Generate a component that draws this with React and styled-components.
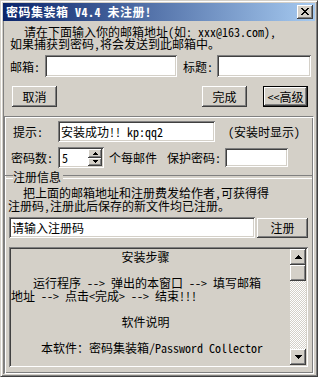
import React from 'react';
import styled, {createGlobalStyle, css} from 'styled-components';

const FONT = `"Noto Sans Mono CJK SC", "Noto Sans CJK SC", "DejaVu Sans", sans-serif`;

const GlobalStyle = createGlobalStyle`
  html, body {
    margin: 0;
    padding: 0;
    background: #d4d0c8;
  }
  * {
    box-sizing: border-box;
  }
`;

const raised = css`
  box-shadow: inset -1px -1px #404040, inset 1px 1px #fff, inset -2px -2px #808080, inset 2px 2px #d4d0c8;
`;

const sunken = css`
  box-shadow: inset 1px 1px #808080, inset -1px -1px #fff, inset 2px 2px #404040, inset -2px -2px #d4d0c8;
`;

const Window = styled.div`
  width: 318px;
  height: 377px;
  display: flex;
  flex-direction: column;
  background: #d4d0c8;
  border: 1px solid;
  border-color: #d4d0c8 #404040 #404040 #d4d0c8;
  box-shadow: inset 1px 1px #fff, inset -1px -1px #808080;
  padding: 2px;
  font-family: ${FONT};
  font-size: 12px;
  color: #000;
`;

const TitleBar = styled.div`
  height: 18px;
  flex: none;
  display: flex;
  align-items: center;
  justify-content: space-between;
  padding: 0 2px 0 3px;
  background: linear-gradient(to right, #0a246a, #a6caf0);
`;

const TitleText = styled.span`
  color: #fff;
  font-weight: bold;
  font-size: 12px;
  line-height: 14px;
  letter-spacing: 0.5px;
  white-space: pre;
`;

const CloseButton = styled.div`
  width: 16px;
  height: 14px;
  background: #d4d0c8;
  ${raised};
  display: flex;
  align-items: center;
  justify-content: center;
  padding: 0 1px 1px 0;
`;

const Client = styled.div`
  flex: 1;
  display: flex;
  flex-direction: column;
  border-left: 1px solid #808080;
`;

const Intro = styled.div`
  margin-top: 5px;
  padding-left: 6px;
  line-height: 12px;
  white-space: pre;
`;

const IndentLine = styled.div`
  padding-left: ${(p) => p.$indent || 0}px;
`;

const Row = styled.div`
  display: flex;
  align-items: center;
  height: ${(p) => p.$h || 22}px;
  margin-top: ${(p) => p.$mt || 0}px;
  padding-left: ${(p) => p.$pl || 0}px;
  padding-right: ${(p) => p.$pr || 0}px;
`;

const Label = styled.span`
  width: ${(p) => p.$w}px;
  flex: none;
  white-space: pre;
  margin-left: ${(p) => p.$ml || 0}px;
`;

const TextBox = styled.div`
  width: ${(p) => p.$w}px;
  height: ${(p) => p.$h || 22}px;
  flex: none;
  background: #fff;
  ${sunken};
  padding: 0 3px;
  display: flex;
  align-items: center;
  white-space: pre;
  margin-left: ${(p) => p.$ml || 0}px;
  overflow: hidden;
`;

const Button = styled.div`
  width: ${(p) => p.$w || 45}px;
  height: ${(p) => p.$h || 21}px;
  flex: none;
  display: flex;
  align-items: center;
  justify-content: center;
  background: #d4d0c8;
  margin-left: ${(p) => p.$ml || 0}px;
  ${raised};
  ${(p) => p.$default && css`
    border: 1px solid #000;
    box-shadow: inset -1px -1px #404040, inset 1px 1px #fff, inset -2px -2px #808080;
  `}
`;

const Spacer = styled.div`
  flex: 1;
`;

const Panel = styled.div`
  flex: 1;
  margin-top: 9px;
  margin-right: 1px;
  border: 1px solid;
  border-color: #808080 #fff #fff #808080;
  box-shadow: inset 1px 1px #fff, inset -1px -1px #808080;
  display: flex;
  flex-direction: column;
  padding: 4px 0 0 0;
`;

const Note = styled.span`
  margin-left: ${(p) => p.$ml || 0}px;
  white-space: pre;
`;

const SpinBox = styled.div`
  width: 46px;
  height: 21px;
  flex: none;
  background: #fff;
  ${sunken};
  display: flex;
  padding: 2px;
`;

const SpinValue = styled.div`
  flex: 1;
  padding-left: 2px;
  line-height: 17px;
`;

const SpinButtons = styled.div`
  width: 14px;
  display: flex;
  flex-direction: column;
`;

const SpinButton = styled.div`
  flex: 1;
  background: #d4d0c8;
  ${raised};
  display: flex;
  align-items: center;
  justify-content: center;
`;

const GroupTitle = styled.div`
  display: flex;
  align-items: center;
  height: 12px;
  margin-top: 3px;
  &::before, &::after {
    content: '';
    height: 2px;
    border-top: 1px solid #808080;
    border-bottom: 1px solid #fff;
  }
  &::before {
    width: 8px;
  }
  &::after {
    flex: 1;
    margin-right: 1px;
  }
  span {
    padding: 0 2px 0 0;
    line-height: 12px;
  }
`;

const GroupText = styled.div`
  margin-top: 3px;
  padding-left: 3px;
  line-height: 13px;
  white-space: pre;
`;

const Memo = styled.div`
  width: 299px;
  height: 120px;
  margin: 9px 0 0 4px;
  background: #d4d0c8;
  ${sunken};
  padding: 2px;
  display: flex;
`;

const MemoText = styled.div`
  flex: 1;
  padding-top: 1px;
  line-height: 13px;
  white-space: pre;
`;

const Centered = styled.div`
  text-align: center;
  padding-right: 10px;
`;

const ScrollBar = styled.div`
  width: 16px;
  display: flex;
  flex-direction: column;
  background: repeating-conic-gradient(#fff 0 25%, #d4d0c8 0 50%) 0 0 / 2px 2px;
`;

const ScrollButton = styled.div`
  width: 16px;
  height: 16px;
  flex: none;
  background: #d4d0c8;
  ${raised};
  display: flex;
  align-items: center;
  justify-content: center;
`;

const Arrow = ({down, size = 7}) => (
  <svg width={size} height={Math.ceil(size / 2)} viewBox={`0 0 ${size} ${Math.ceil(size / 2)}`} shapeRendering="crispEdges">
    <polygon
      points={down ? `0,0 ${size},0 ${size / 2},${Math.ceil(size / 2)}` : `0,${Math.ceil(size / 2)} ${size},${Math.ceil(size / 2)} ${size / 2},0`}
      fill="#000"
    />
  </svg>
);

const CloseGlyph = () => (
  <svg width="8" height="7" viewBox="0 0 8 7" shapeRendering="crispEdges">
    <path d="M0 0h2v1h-2zM6 0h2v1h-2zM1 1h2v1h-2zM5 1h2v1h-2zM2 2h4v1h-4zM3 3h2v1h-2zM2 4h4v1h-4zM1 5h2v1h-2zM5 5h2v1h-2zM0 6h2v1h-2zM6 6h2v1h-2z" fill="#000"/>
  </svg>
);

const App = () => {
  return <>
    <GlobalStyle/>
    <Window>
      <TitleBar>
        <TitleText>密码集装箱 V4.4 未注册!</TitleText>
        <CloseButton><CloseGlyph/></CloseButton>
      </TitleBar>
      <Client>
        <Intro>
          <IndentLine $indent={14}>请在下面输入你的邮箱地址(如: xxx@163.com),</IndentLine>
          <IndentLine>如果捕获到密码,将会发送到此邮箱中。</IndentLine>
        </Intro>

        <Row $h={22} $mt={5} $pl={6}>
          <Label $w={35}>邮箱:</Label>
          <TextBox $w={132}/>
          <Label $w={34} $ml={6}>标题:</Label>
          <TextBox $w={94}/>
        </Row>

        <Row $h={21} $mt={9} $pl={8} $pr={7}>
          <Button>取消</Button>
          <Spacer/>
          <Button>完成</Button>
          <Button $ml={16} $default>&lt;&lt;高级</Button>
        </Row>

        <Panel>
          <Row $h={21} $pl={8}>
            <Label $w={45}>提示:</Label>
            <TextBox $w={157} $h={21}>安装成功!! kp:qq2</TextBox>
            <Note $ml={13}>(安装时显示)</Note>
          </Row>

          <Row $h={21} $mt={5} $pl={6}>
            <Label $w={47}>密码数:</Label>
            <SpinBox>
              <SpinValue>5</SpinValue>
              <SpinButtons>
                <SpinButton><Arrow size={5}/></SpinButton>
                <SpinButton><Arrow size={5} down/></SpinButton>
              </SpinButtons>
            </SpinBox>
            <Note $ml={5}>个每邮件</Note>
            <Note $ml={10}>保护密码:</Note>
            <TextBox $w={63} $h={19} $ml={4}/>
          </Row>

          <GroupTitle><span>注册信息</span></GroupTitle>
          <GroupText>
            <IndentLine $indent={15}>把上面的邮箱地址和注册费发给作者,可获得得</IndentLine>
            <IndentLine>注册码,注册此后保存的新文件均已注册。</IndentLine>
          </GroupText>

          <Row $h={21} $mt={5} $pl={4}>
            <TextBox $w={246} $h={21}>请输入注册码</TextBox>
            <Button $w={51} $h={20} $ml={2}>注册</Button>
          </Row>

          <Memo>
            <MemoText>
              <Centered>安装步骤</Centered>
              <div> </div>
              <IndentLine $indent={22}>运行程序 --&gt; 弹出的本窗口 --&gt; 填写邮箱</IndentLine>
              <div>地址 --&gt; 点击&lt;完成&gt; --&gt; 结束!!!</div>
              <div> </div>
              <Centered>软件说明</Centered>
              <div> </div>
              <IndentLine $indent={30}>本软件：密码集装箱/Password Collector</IndentLine>
            </MemoText>
            <ScrollBar>
              <ScrollButton><Arrow/></ScrollButton>
              <ScrollButton/>
              <Spacer/>
              <ScrollButton><Arrow down/></ScrollButton>
            </ScrollBar>
          </Memo>
        </Panel>
      </Client>
    </Window>
  </>;
};

export default App;
